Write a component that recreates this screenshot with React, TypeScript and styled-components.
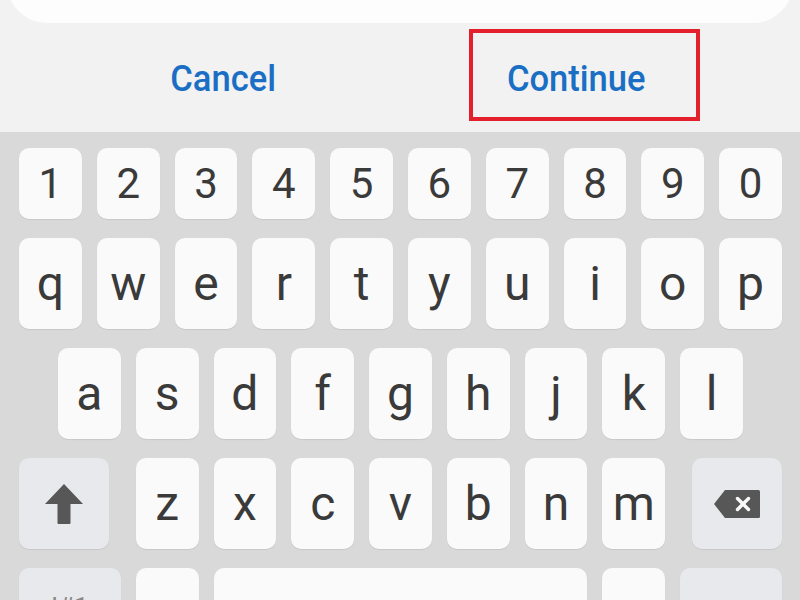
import React from "react";
import styled, { createGlobalStyle } from "styled-components";

const Global = createGlobalStyle`
  html, body { margin: 0; padding: 0; }
  body { width: 800px; height: 600px; overflow: hidden; font-family: Roboto, "Noto Sans", sans-serif; }
`;

const Page = styled.div`
  width: 800px;
  height: 600px;
  display: flex;
  flex-direction: column;
  overflow: hidden;
`;

const DialogFoot = styled.div`
  position: relative;
  height: 132px;
  flex: none;
  background: #f2f2f2;
  display: flex;
  flex-direction: column;
`;

const Card = styled.div`
  height: 80px;
  margin: -57px 7px 0;
  background: #fdfdfd;
  border-radius: 0 0 40px 40px;
  flex: none;
`;

const ButtonRow = styled.div`
  flex: 1;
  display: flex;
  justify-content: center;
  align-items: center;
  gap: 113px;
  padding-top: 3px;
`;

const ActionButton = styled.button`
  width: 240px;
  background: none;
  border: none;
  padding: 0;
  font-family: Roboto, sans-serif;
  font-weight: 500;
  font-size: 36px;
  line-height: 1;
  color: #1a6fc4;
  cursor: pointer;
`;

const ButtonText = styled.span`
  display: inline-block;
  transform: scaleX(0.96);
`;

const Highlight = styled.div`
  position: absolute;
  left: 469px;
  top: 29px;
  width: 231px;
  height: 92px;
  box-sizing: border-box;
  border: 4px solid #e3202b;
  pointer-events: none;
`;

const Keyboard = styled.div`
  flex: 1;
  background: #d9d9d9;
  padding: 16px 18px 0 19px;
  display: flex;
  flex-direction: column;
  gap: 19px;
  overflow: hidden;
`;

const Row = styled.div<{ $tall?: boolean; $spread?: boolean }>`
  display: flex;
  justify-content: ${(p) => (p.$spread ? "space-between" : "center")};
  gap: 15px;
  height: ${(p) => (p.$tall ? 91 : 71)}px;
  flex: none;
`;

const Group = styled.div`
  display: flex;
  gap: 15px;
  width: calc((100% - 135px) * 0.7 + 90px);
`;

const Key = styled.div<{ $special?: boolean; $w?: string; $digit?: boolean }>`
  width: ${(p) => p.$w ?? "calc((763px - 135px) / 10)"};
  flex: ${(p) => (p.$w === "grow" ? "1" : "none")};
  ${(p) => (p.$w === "grow" ? "width: auto;" : "")}
  box-sizing: border-box;
  border-radius: 10px;
  background: ${(p) => (p.$special ? "#e8e9ec" : "#fafafa")};
  box-shadow: 0 1px 1px rgba(0, 0, 0, 0.08);
  display: flex;
  align-items: center;
  justify-content: center;
  font-family: Roboto, sans-serif;
  font-size: ${(p) => (p.$digit ? 42 : 48)}px;
  line-height: 1;
  color: #3a3a3a;
`;

const GroupKey = styled(Key)`
  width: auto;
  flex: 1;
`;

const SymLabel = styled.span`
  font-size: 26px;
  color: #888;
  padding-bottom: 14px;
`;

const ShiftIcon = () => (
  <svg width="38" height="40" viewBox="0 0 38 40">
    <path d="M19 0 L38 20 L25.5 20 L25.5 39 Q25.5 40 24.5 40 L13.5 40 Q12.5 40 12.5 39 L12.5 20 L0 20 Z" fill="#575757" />
  </svg>
);

const BackspaceIcon = () => (
  <svg width="46" height="28" viewBox="0 0 46 28">
    <path d="M11 0 L44.5 0 Q46 0 46 1.5 L46 26.5 Q46 28 44.5 28 L11 28 L0 14 Z" fill="#575757" />
    <path d="M23.5 8.5 L34.5 19.5 M34.5 8.5 L23.5 19.5" stroke="#fafafa" strokeWidth="3.4" strokeLinecap="round" />
  </svg>
);

const digits = ["1", "2", "3", "4", "5", "6", "7", "8", "9", "0"];
const row2 = ["q", "w", "e", "r", "t", "y", "u", "i", "o", "p"];
const row3 = ["a", "s", "d", "f", "g", "h", "j", "k", "l"];
const row4 = ["z", "x", "c", "v", "b", "n", "m"];

export default function App() {
  return (
    <Page>
      <Global />
      <DialogFoot>
        <Card />
        <ButtonRow>
          <ActionButton>
            <ButtonText>Cancel</ButtonText>
          </ActionButton>
          <ActionButton>
            <ButtonText>Continue</ButtonText>
          </ActionButton>
        </ButtonRow>
        <Highlight />
      </DialogFoot>
      <Keyboard>
        <Row>
          {digits.map((d) => (
            <Key key={d} $digit>
              {d}
            </Key>
          ))}
        </Row>
        <Row $tall>
          {row2.map((c) => (
            <Key key={c}>{c}</Key>
          ))}
        </Row>
        <Row $tall>
          {row3.map((c) => (
            <Key key={c}>{c}</Key>
          ))}
        </Row>
        <Row $tall $spread>
          <Key $special $w="90px">
            <ShiftIcon />
          </Key>
          <Group>
            {row4.map((c) => (
              <GroupKey key={c}>{c}</GroupKey>
            ))}
          </Group>
          <Key $special $w="90px">
            <BackspaceIcon />
          </Key>
        </Row>
        <Row $tall>
          <Key $special $w="102px">
            <SymLabel>!#1</SymLabel>
          </Key>
          <Key />
          <Key $w="grow" />
          <Key />
          <Key $special $w="102px" />
        </Row>
      </Keyboard>
    </Page>
  );
}
